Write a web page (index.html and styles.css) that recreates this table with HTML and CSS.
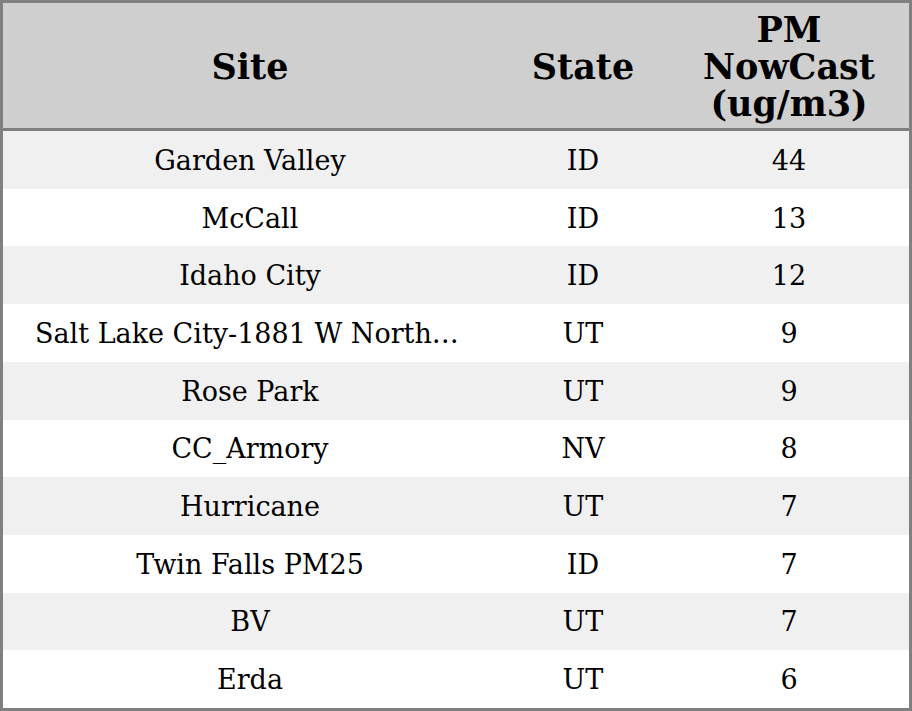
FILE: index.html
```html
<!DOCTYPE html>
<html>
<head>
<meta charset="utf-8">
<link rel="stylesheet" href="styles.css">
</head>
<body>
<div class="table">
  <div class="row head">
    <div class="cell site">Site</div>
    <div class="cell state">State</div>
    <div class="cell pm">PM<br>NowCast<br>(ug/m3)</div>
  </div>
  <div class="row odd"><div class="cell site">Garden Valley</div><div class="cell state">ID</div><div class="cell pm">44</div></div>
  <div class="row"><div class="cell site">McCall</div><div class="cell state">ID</div><div class="cell pm">13</div></div>
  <div class="row odd"><div class="cell site">Idaho City</div><div class="cell state">ID</div><div class="cell pm">12</div></div>
  <div class="row"><div class="cell site">Salt Lake City-1881 W Northtemple</div><div class="cell state">UT</div><div class="cell pm">9</div></div>
  <div class="row odd"><div class="cell site">Rose Park</div><div class="cell state">UT</div><div class="cell pm">9</div></div>
  <div class="row"><div class="cell site">CC_Armory</div><div class="cell state">NV</div><div class="cell pm">8</div></div>
  <div class="row odd"><div class="cell site">Hurricane</div><div class="cell state">UT</div><div class="cell pm">7</div></div>
  <div class="row"><div class="cell site">Twin Falls PM25</div><div class="cell state">ID</div><div class="cell pm">7</div></div>
  <div class="row odd"><div class="cell site">BV</div><div class="cell state">UT</div><div class="cell pm">7</div></div>
  <div class="row"><div class="cell site">Erda</div><div class="cell state">UT</div><div class="cell pm">6</div></div>
</div>
</body>
</html>
```
FILE: styles.css
```css
html, body {
  margin: 0;
  padding: 0;
}
body {
  font-family: "DejaVu Serif", serif;
  color: #000;
  background: #fff;
}
.table {
  box-sizing: border-box;
  width: 912px;
  height: 711px;
  border: 3px solid #808080;
  display: grid;
  grid-template-rows: 128px repeat(10, 1fr);
}
.row {
  display: grid;
  grid-template-columns: 494px 172px 1fr;
  align-items: center;
  background: #fff;
  font-size: 27px;
  min-height: 0;
}
.row.odd {
  background: #f0f0f0;
}
.row.head {
  background: #cfcfcf;
  border-bottom: 3px solid #808080;
  font-size: 35px;
  font-weight: bold;
  line-height: 37px;
}
.cell {
  text-align: center;
  white-space: nowrap;
  overflow: hidden;
  text-overflow: ellipsis;
  padding: 1px 32px 0;
}
.row.head .cell {
  overflow: visible;
  padding: 2px 4px 0;
}
```
